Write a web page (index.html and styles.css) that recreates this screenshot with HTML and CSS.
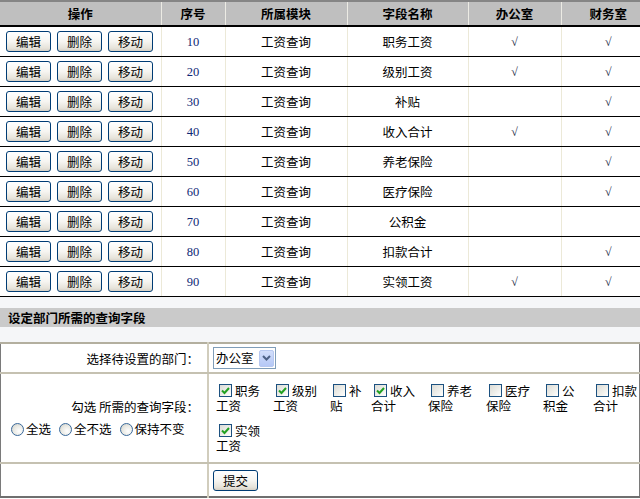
FILE: index.html
```html
<!DOCTYPE html>
<html>
<head>
<meta charset="utf-8">
<link rel="stylesheet" href="styles.css">
</head>
<body>
<table class="list">
  <colgroup>
    <col class="c1"><col class="c2"><col class="c3"><col class="c4"><col class="c5"><col class="c6">
  </colgroup>
  <thead>
    <tr><th>操作</th><th>序号</th><th>所属模块</th><th>字段名称</th><th>办公室</th><th>财务室</th></tr>
  </thead>
  <tbody>
    <tr><td class="ops"><button class="btn">编辑</button><button class="btn">删除</button><button class="btn">移动</button></td><td class="num">10</td><td>工资查询</td><td>职务工资</td><td><span class="tick">√</span></td><td><span class="tick">√</span></td></tr>
    <tr><td class="ops"><button class="btn">编辑</button><button class="btn">删除</button><button class="btn">移动</button></td><td class="num">20</td><td>工资查询</td><td>级别工资</td><td><span class="tick">√</span></td><td><span class="tick">√</span></td></tr>
    <tr><td class="ops"><button class="btn">编辑</button><button class="btn">删除</button><button class="btn">移动</button></td><td class="num">30</td><td>工资查询</td><td>补贴</td><td></td><td><span class="tick">√</span></td></tr>
    <tr><td class="ops"><button class="btn">编辑</button><button class="btn">删除</button><button class="btn">移动</button></td><td class="num">40</td><td>工资查询</td><td>收入合计</td><td><span class="tick">√</span></td><td><span class="tick">√</span></td></tr>
    <tr><td class="ops"><button class="btn">编辑</button><button class="btn">删除</button><button class="btn">移动</button></td><td class="num">50</td><td>工资查询</td><td>养老保险</td><td></td><td><span class="tick">√</span></td></tr>
    <tr><td class="ops"><button class="btn">编辑</button><button class="btn">删除</button><button class="btn">移动</button></td><td class="num">60</td><td>工资查询</td><td>医疗保险</td><td></td><td><span class="tick">√</span></td></tr>
    <tr><td class="ops"><button class="btn">编辑</button><button class="btn">删除</button><button class="btn">移动</button></td><td class="num">70</td><td>工资查询</td><td>公积金</td><td></td><td></td></tr>
    <tr><td class="ops"><button class="btn">编辑</button><button class="btn">删除</button><button class="btn">移动</button></td><td class="num">80</td><td>工资查询</td><td>扣款合计</td><td></td><td><span class="tick">√</span></td></tr>
    <tr><td class="ops"><button class="btn">编辑</button><button class="btn">删除</button><button class="btn">移动</button></td><td class="num">90</td><td>工资查询</td><td>实领工资</td><td><span class="tick">√</span></td><td><span class="tick">√</span></td></tr>
  </tbody>
</table>

<div class="section">
  <h2 class="section-title">设定部门所需的查询字段</h2>
</div>

<table class="form">
  <tr class="r1">
    <td class="label">选择待设置的部门：</td>
    <td class="field">
      <span class="select"><span class="select-text">办公室</span><span class="select-arrow"><svg width="9" height="6" viewBox="0 0 9 6"><path d="M1 1 L4.5 4.5 L8 1" fill="none" stroke="#4d6185" stroke-width="2"/></svg></span></span>
    </td>
  </tr>
  <tr class="r2">
    <td class="label">
      <div class="label-line">勾选 所需的查询字段：</div>
      <div class="radios">
        <span class="radio-item"><span class="radio"></span>全选</span>
        <span class="radio-item"><span class="radio"></span>全不选</span>
        <span class="radio-item"><span class="radio"></span>保持不变</span>
      </div>
    </td>
    <td class="field fields-cell">
      <div class="checks">
        <div class="item"><span class="cb on"><svg width="9" height="8" viewBox="0 0 9 8"><path d="M1 3.5 L3.5 6 L8 1" fill="none" stroke="#21a121" stroke-width="2"/></svg></span>职务工资</div>
        <div class="item"><span class="cb on"><svg width="9" height="8" viewBox="0 0 9 8"><path d="M1 3.5 L3.5 6 L8 1" fill="none" stroke="#21a121" stroke-width="2"/></svg></span>级别工资</div>
        <div class="item"><span class="cb"></span>补贴</div>
        <div class="item"><span class="cb on"><svg width="9" height="8" viewBox="0 0 9 8"><path d="M1 3.5 L3.5 6 L8 1" fill="none" stroke="#21a121" stroke-width="2"/></svg></span>收入合计</div>
        <div class="item"><span class="cb"></span>养老保险</div>
        <div class="item"><span class="cb"></span>医疗保险</div>
        <div class="item"><span class="cb"></span>公积金</div>
        <div class="item"><span class="cb"></span>扣款合计</div>
        <div class="item"><span class="cb on"><svg width="9" height="8" viewBox="0 0 9 8"><path d="M1 3.5 L3.5 6 L8 1" fill="none" stroke="#21a121" stroke-width="2"/></svg></span>实领工资</div>
      </div>
    </td>
  </tr>
  <tr class="r3">
    <td class="label"></td>
    <td class="field"><button class="btn">提交</button></td>
  </tr>
</table>
</body>
</html>
```

FILE: styles.css
```css
html, body {
  margin: 0;
  padding: 0;
  overflow: hidden;
  background: #fff;
}
body {
  width: 640px;
  font-family: "Noto Sans CJK SC", "Liberation Sans", sans-serif;
  font-size: 12.5px;
  color: #000;
}

.list {
  border-collapse: collapse;
  table-layout: fixed;
  width: 655px;
  border-top: 2px solid #858585;
}
.c1 { width: 161px; }
.c2 { width: 64px; }
.c3 { width: 122px; }
.c4 { width: 121px; }
.c5 { width: 93px; }
.c6 { width: 94px; }

.list th {
  background: #bfbfbf;
  height: 23px;
  padding: 0;
  font-weight: bold;
  font-size: 12.5px;
  line-height: 22px;
  text-align: center;
  border-left: 1px solid #ecebe4;
  border-bottom: 2px solid #000;
}
.list th:first-child, .list td:first-child { border-left: none; }

.list td {
  height: 29px;
  padding: 0;
  text-align: center;
  line-height: 16px;
  border-left: 1px solid #ece9d8;
  border-bottom: 1px solid #000;
}
.list td.ops {
  text-align: left;
  padding-left: 6px;
}

.btn {
  width: 45px;
  height: 21px;
  margin: 0 6px 0 0;
  padding: 0;
  vertical-align: middle;
  font-family: inherit;
  font-size: 12.5px;
  line-height: 17px;
  color: #000;
  border: 1px solid #003c74;
  border-radius: 3px;
  background: linear-gradient(#ffffff 0%, #f6f5f1 50%, #e6e3da 85%, #d6d0c5 100%);
}

.num {
  font-family: "Liberation Serif", serif;
  font-size: 12.5px;
  color: #0e2775;
}
.tick {
  font-family: "Liberation Serif", serif;
  font-size: 12px;
  color: #141c40;
}

.section {
  background: #f5f6f8;
  padding: 11px 0 15px;
}
.section-title {
  margin: 0;
  height: 19px;
  line-height: 19px;
  padding-left: 8px;
  background: #cacaca;
  font-size: 12.5px;
  font-weight: bold;
}

.form {
  border-collapse: collapse;
  width: 640px;
  border-left: 1px solid #7a7a7a;
  border-right: 1px solid #7a7a7a;
  border-bottom: 2px solid #6f6f6f;
  border-top: 2px solid #b3af9f;
}
.form td {
  padding: 0;
  border-bottom: 2px solid #c5c1b1;
}
.form tr.r3 td { border-bottom: none; }
.form td.label {
  width: 199px;
  padding-right: 8px;
  text-align: right;
  border-right: 2px solid #d1cdbd;
}
.form .r1 td { height: 28px; }
.form .r3 td { height: 32px; }

.form td.field { padding-left: 4px; }

.select {
  display: inline-flex;
  align-items: center;
  width: 63px;
  height: 22px;
  box-sizing: border-box;
  border: 1px solid #7f9db9;
  background: #fff;
  vertical-align: middle;
}
.select-text {
  flex: 1;
  padding-left: 2px;
  line-height: 18px;
}
.select-arrow {
  width: 15px;
  height: 17px;
  margin-right: 1px;
  border-radius: 2px;
  background: linear-gradient(#d2defb, #b5c8f6);
  border: 1px solid #b7c8f0;
  box-sizing: border-box;
  display: flex;
  align-items: center;
  justify-content: center;
}

.label-line {
  line-height: 22px;
}
.radios {
  text-align: left;
  padding-left: 10px;
  display: flex;
  gap: 8px;
  line-height: 22px;
}
.radio-item {
  display: inline-flex;
  align-items: center;
  white-space: nowrap;
}
.radio {
  width: 13px;
  height: 13px;
  box-sizing: border-box;
  border-radius: 50%;
  border: 1px solid #3b6a9c;
  background: radial-gradient(circle at 65% 65%, #ffffff 0%, #e8e8e2 55%, #c9c9c0 100%);
  margin-right: 2px;
}

.form td.fields-cell {
  padding: 9px 0 9px 7px;
}
.checks {
  display: grid;
  grid-template-columns: 50px 50px 34px 50px 51px 50px 43px 46px;
  column-gap: 7px;
  row-gap: 10px;
  line-height: 15px;
}
.item {
  height: 30px;
}
.cb {
  display: inline-flex;
  align-items: center;
  justify-content: center;
  width: 13px;
  height: 13px;
  box-sizing: border-box;
  margin: 1px 3px 0;
  vertical-align: top;
  border: 1px solid #1c5180;
  background: linear-gradient(135deg, #dcdcd6 0%, #f0f0ec 60%, #ffffff 100%);
}
```
